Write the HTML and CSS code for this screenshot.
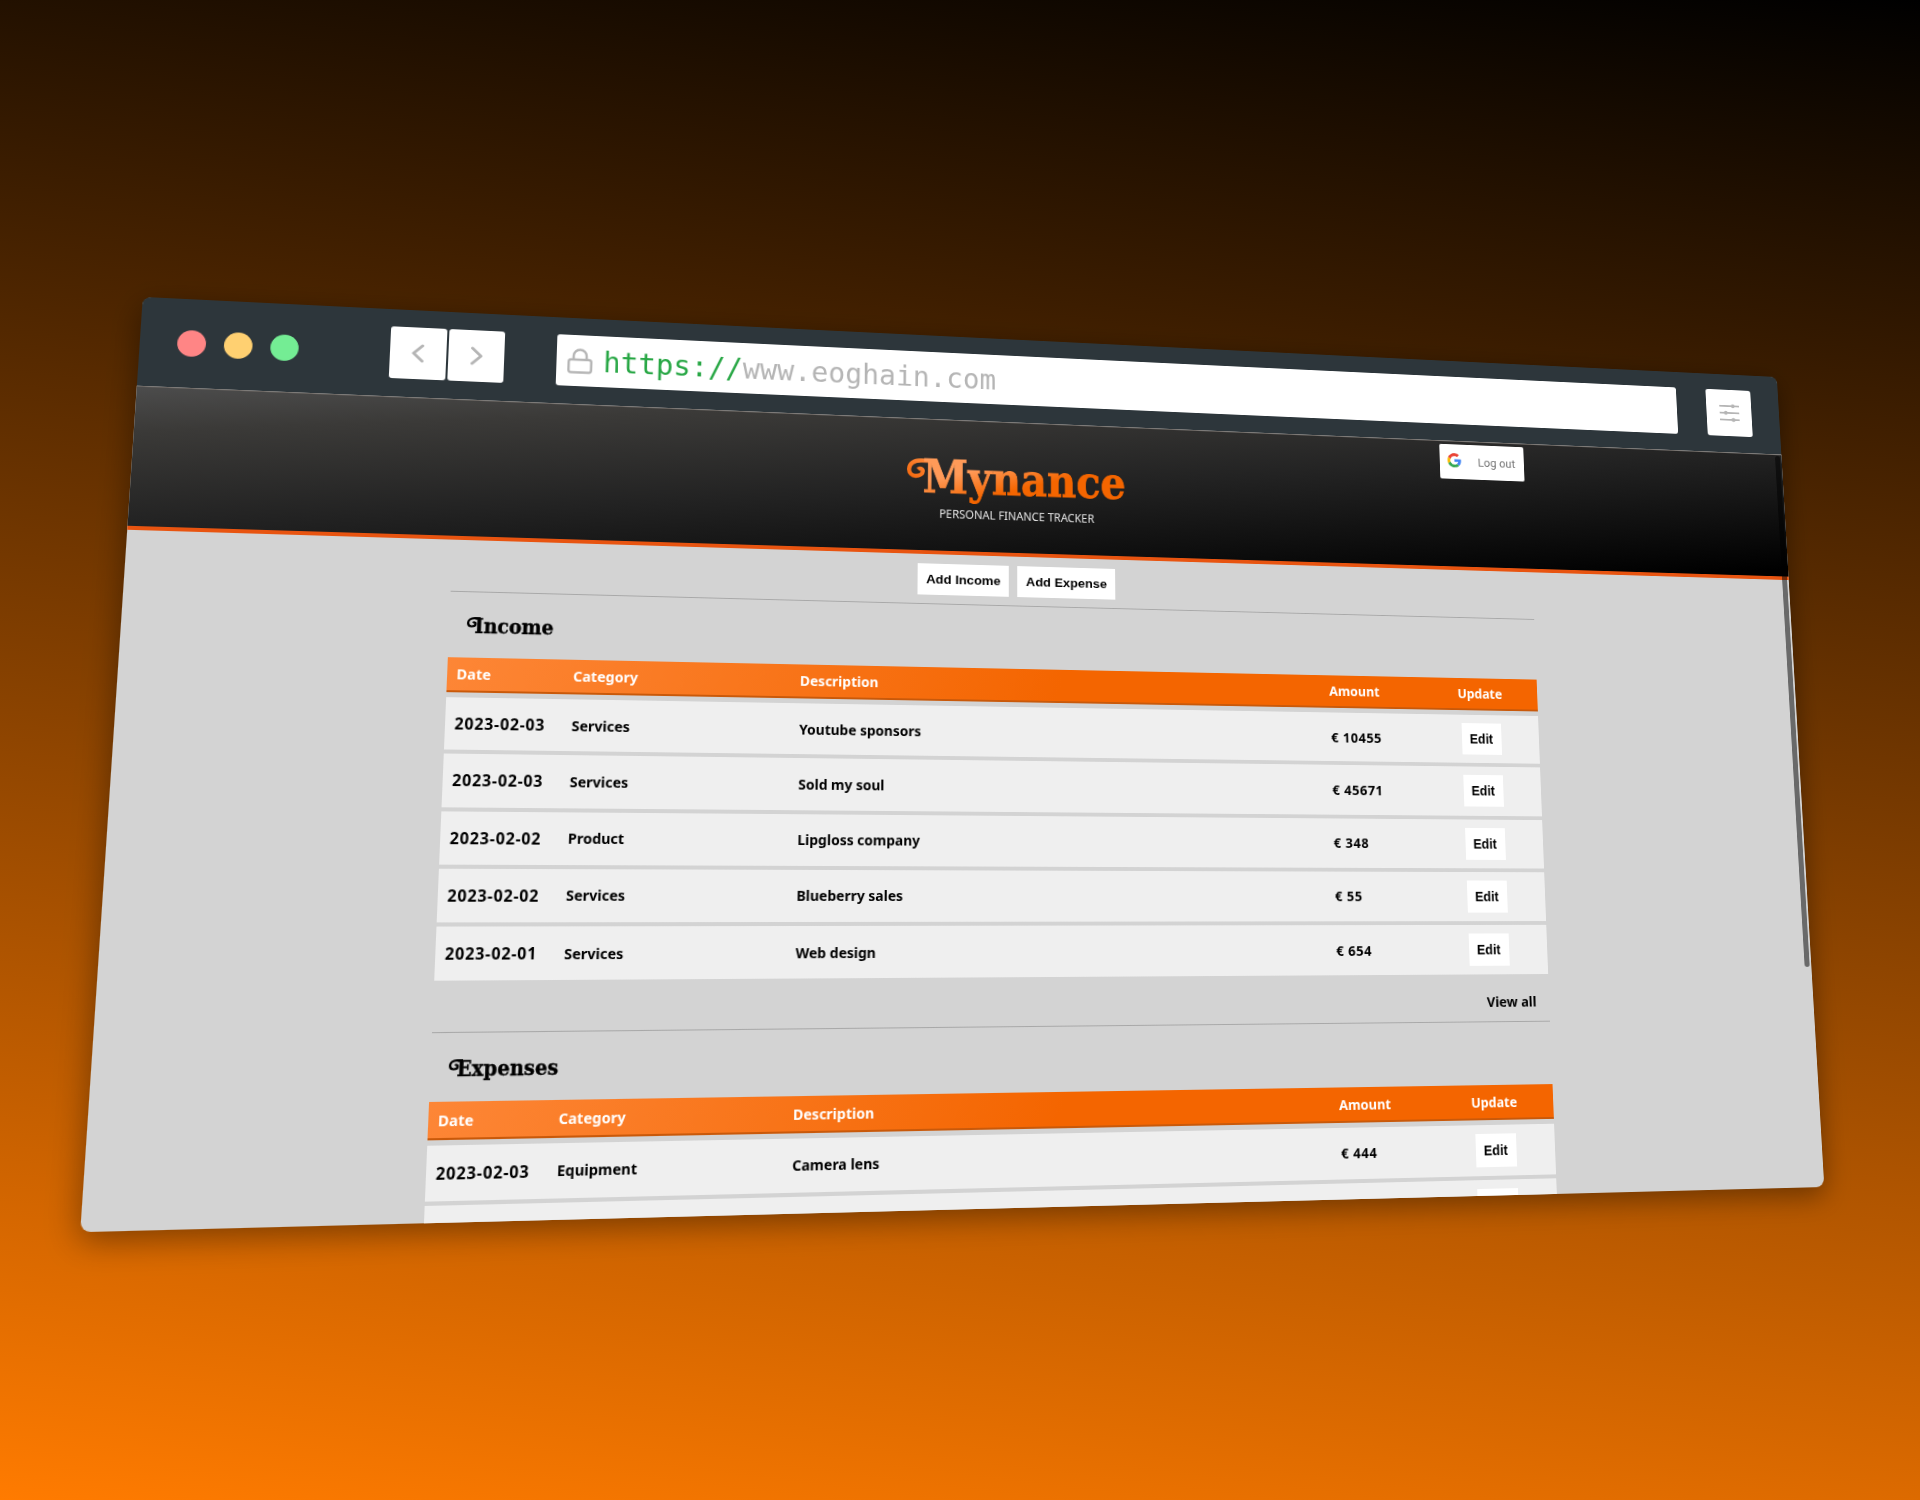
FILE: index.html
```html
<!DOCTYPE html>
<html lang="en">
<head>
<meta charset="utf-8">
<title>Mynance</title>
<link rel="stylesheet" href="styles.css">
</head>
<body>
<div class="window">
  <div class="toolbar">
    <div class="dots"><span class="dot red"></span><span class="dot yellow"></span><span class="dot green"></span></div>
    <div class="nav">
      <span class="tool"><svg width="12" height="20" viewBox="0 0 12 20"><path d="M10.5 2 2 10l8.500 8"/></svg></span>
      <span class="tool"><svg width="12" height="20" viewBox="0 0 12 20"><path d="M1.500 2 10 10l-8.500 8"/></svg></span>
    </div>
    <div class="address">
      <svg class="lock" width="25" height="27" viewBox="0 0 25 27"><rect x="1.200" y="12" width="22.600" height="13.500" rx="2.500"/><path d="M6 12V8a6.500 6.500 0 0 1 13 0v4"/></svg>
      <span class="url"><span class="scheme">https://</span>www.eoghain.com</span>
    </div>
    <span class="tool settings"><svg width="24" height="22" viewBox="0 0 24 22"><path d="M0 3h24M0 11h24M0 19h24"/><circle cx="16.500" cy="3" r="2.300"/><circle cx="7.500" cy="11" r="2.300"/><circle cx="16.500" cy="19" r="2.300"/></svg></span>
  </div>
  <div class="page">
    <header class="header">
      <div class="brand">
        <div class="logo"><svg class="swash" width="26" height="22" viewBox="0 0 26 22"><defs><linearGradient id="sw" x1="0" y1="1" x2="1" y2="0"><stop offset="0" stop-color="#f46a10"/><stop offset="1" stop-color="#ff8a3c"/></linearGradient></defs><path stroke="url(#sw)" d="M26 2.200H15C7 2.200 2.200 6.500 2.200 12c0 4 3 7 7 7 4.500 0 7.500-2.500 7.500-5.500 0-2.500-3.200-3.500-5-1.500"/></svg><span>Mynance</span></div>
        <div class="tagline">PERSONAL FINANCE TRACKER</div>
      </div>
      <div class="logout">
        <svg width="16" height="16" viewBox="0 0 48 48"><path fill="#EA4335" d="M24 9.500c3.540 0 6.710 1.220 9.210 3.600l6.850-6.850C35.900 2.380 30.470 0 24 0 14.620 0 6.510 5.380 2.560 13.220l7.980 6.190C12.430 13.720 17.740 9.500 24 9.500z"/><path fill="#4285F4" d="M46.980 24.550c0-1.570-.15-3.090-.38-4.550H24v9.020h12.940c-.58 2.960-2.260 5.480-4.780 7.180l7.730 6c4.510-4.180 7.090-10.360 7.090-17.650z"/><path fill="#FBBC05" d="M10.530 28.590c-.48-1.450-.76-2.990-.76-4.590s.27-3.140.76-4.590l-7.980-6.190C.92 16.460 0 20.120 0 24c0 3.880.92 7.540 2.560 10.780l7.970-6.190z"/><path fill="#34A853" d="M24 48c6.480 0 11.930-2.130 15.890-5.810l-7.730-6c-2.150 1.450-4.920 2.300-8.160 2.300-6.260 0-11.570-4.220-13.470-9.910l-7.980 6.190C6.510 42.620 14.620 48 24 48z"/></svg>
        <span>Log out</span>
      </div>
    </header>
    <main class="content">
      <div class="actions"><span class="btn">Add Income</span><span class="btn">Add Expense</span></div>
      <section class="section">
        <h2 class="title"><svg class="swash" width="13" height="11" viewBox="0 0 26 22"><path stroke="#000" d="M26 2.200H15C7 2.200 2.200 6.500 2.200 12c0 4 3 7 7 7 4.500 0 7.500-2.500 7.500-5.500 0-2.500-3.200-3.500-5-1.500"/></svg><span>Income</span></h2>
        <div class="row head"><span>Date</span><span>Category</span><span>Description</span><span>Amount</span><span class="upd">Update</span></div>
        <div class="row"><span class="date">2023-02-03</span><span>Services</span><span>Youtube sponsors</span><span class="amount">€ 10455</span><span class="upd"><b class="btn edit">Edit</b></span></div>
        <div class="row"><span class="date">2023-02-03</span><span>Services</span><span>Sold my soul</span><span class="amount">€ 45671</span><span class="upd"><b class="btn edit">Edit</b></span></div>
        <div class="row"><span class="date">2023-02-02</span><span>Product</span><span>Lipgloss company</span><span class="amount">€ 348</span><span class="upd"><b class="btn edit">Edit</b></span></div>
        <div class="row"><span class="date">2023-02-02</span><span>Services</span><span>Blueberry sales</span><span class="amount">€ 55</span><span class="upd"><b class="btn edit">Edit</b></span></div>
        <div class="row"><span class="date">2023-02-01</span><span>Services</span><span>Web design</span><span class="amount">€ 654</span><span class="upd"><b class="btn edit">Edit</b></span></div>
        <div class="viewall">View all</div>
      </section>
      <section class="section">
        <h2 class="title"><svg class="swash" width="13" height="11" viewBox="0 0 26 22"><path stroke="#000" d="M26 2.200H15C7 2.200 2.200 6.500 2.200 12c0 4 3 7 7 7 4.500 0 7.500-2.500 7.500-5.500 0-2.500-3.200-3.500-5-1.500"/></svg><span>Expenses</span></h2>
        <div class="row head"><span>Date</span><span>Category</span><span>Description</span><span>Amount</span><span class="upd">Update</span></div>
        <div class="row"><span class="date">2023-02-03</span><span>Equipment</span><span>Camera lens</span><span class="amount">€ 444</span><span class="upd"><b class="btn edit">Edit</b></span></div>
        <div class="row"><span></span><span></span><span></span><span></span><span class="upd"><b class="btn edit"></b></span></div>
      </section>
    </main>
    <div class="scrollbar"></div>
  </div>
</div>
</body>
</html>
```
FILE: styles.css
```css
* { box-sizing: border-box; }

body {
  margin: 0;
  width: 1920px;
  height: 1500px;
  overflow: hidden;
  background: linear-gradient(7deg, #ff7b00, #000);
  font-family: "Noto Sans", "Open Sans", sans-serif;
}

.window {
  width: 1760px;
  height: 900px;
  display: flex;
  flex-direction: column;
  border-radius: 9px;
  background: #d3d3d3;
  box-shadow: 0 8px 30px rgba(0, 0, 0, .4);
  transform-origin: 0 0;
  transform: matrix3d(1.08079, .077841, 0, .0000857608, -.075544, .947167, 0, -.0000747089, 0, 0, 1, 0, 142.8, 296.9, 0, 1);
}

.toolbar {
  flex: none;
  height: 90.600px;
  display: flex;
  align-items: center;
  padding: 0 34px 0 34.700px;
  border-radius: 8px 8px 0 0;
  background: #2d363b;
}

.dots { display: flex; gap: 16.500px; width: 203px; }
.dot { width: 27.500px; height: 27.500px; border-radius: 50%; }
.red { background: #ff8585; }
.yellow { background: #ffd071; }
.green { background: #74ed94; }

.nav { display: flex; gap: 2.500px; width: 164px; }

.tool {
  width: 55px;
  height: 54px;
  display: flex;
  align-items: center;
  justify-content: center;
  border-radius: 3px;
  background: #fff;
}
.tool svg { fill: none; stroke: #b5b5b5; stroke-width: 3; stroke-linecap: round; stroke-linejoin: round; }
.settings { margin-left: auto; }
.settings svg { stroke-width: 1.800; }
.settings circle { fill: #b5b5b5; stroke: none; }

.address {
  width: 1233px;
  height: 54px;
  display: flex;
  align-items: center;
  gap: 11px;
  padding-left: 11px;
  border-radius: 3px;
  background: #fff;
}
.lock { fill: none; stroke: #b5b5b5; stroke-width: 2.400; }
.url { padding-top: 1px; font: 29.500px/54px "DejaVu Sans Mono", monospace; color: #b5b5b5; }
.scheme { color: #28a745; }

.page { position: relative; flex: 1; min-height: 0; overflow: hidden; border-radius: 0 0 9px 9px; }

.header {
  position: relative;
  height: 145.600px;
  display: flex;
  justify-content: center;
  border-top: 1px solid #6c6763;
  border-bottom: 4px solid #e85410;
  background: linear-gradient(to bottom right, #4c4c4c, #3b3a38 16%, #222 50%, #000 97%);
}

.brand { display: flex; flex-direction: column; align-items: center; padding-top: 33px; }
.logo { display: flex; font: bold 48px/56px "DejaVu Serif Condensed", "DejaVu Serif", serif; }
.logo span {
  color: transparent;
  background: linear-gradient(165deg, #ff9a58 30%, #f46500 58%);
  background-clip: text;
  -webkit-background-clip: text;
  -webkit-text-stroke: .8px transparent;
}
.swash { fill: none; stroke-width: 4.400; margin-right: -9px; }
.logo .swash { margin-top: 9px; }
.tagline { margin-top: 2.500px; font-size: 11.850px; line-height: 18px; color: #e4e4e4; }

.logout {
  position: absolute;
  left: 1351px;
  top: 3px;
  width: 98px;
  height: 39px;
  display: flex;
  align-items: center;
  padding: 0 9px 3px;
  gap: 19px;
  border-radius: 2px;
  background: #fff;
  font: 13px Roboto, sans-serif;
  color: #757575;
}
.logout span { padding-top: 4px; white-space: nowrap; }
.logout svg { flex: none; }

.content { width: 1147px; margin: 0 auto; }
.actions { display: flex; justify-content: center; gap: 9px; padding-top: 9.500px; height: 52.200px; }
.btn {
  height: 33.500px;
  padding: 0 9px;
  background: #fff;
  color: #000;
  font: bold 13.700px/34px "Liberation Sans", sans-serif;
}

.section { border-top: 1px solid #a8a8a8; height: 432.800px; }
.title {
  display: flex;
  height: 65.300px;
  margin: 0;
  padding: 20px 0 0 17px;
  font: bold 20.500px/28px "DejaVu Serif Condensed", "DejaVu Serif", serif;
  -webkit-text-stroke: .35px #000;
}
.title .swash { margin: 5px -5px 0 0; }

.row {
  display: grid;
  grid-template-columns: 113px 226px 563px 114px 131px;
  align-items: center;
  height: 52.300px;
  margin-bottom: 4px;
  background: #efefef;
  font-size: 14px;
  font-weight: 700;
  color: #000;
}
.row > span { padding-left: 9.500px; white-space: nowrap; }
.row > .upd { display: flex; justify-content: center; padding: 0; }
.row .date { font-size: 15.300px; letter-spacing: .75px; }
.row .amount { padding-left: 10.500px; font-size: 14.200px; letter-spacing: .6px; }
.edit { width: 45px; height: 34px; padding: 0; text-align: center; font-size: 14px; line-height: 35px; }
.head {
  height: 35.700px;
  margin-bottom: 4.600px;
  border-bottom: 2px solid #c9590a;
  background: linear-gradient(110deg, #fd8636, #f46500 54%);
  color: #fff;
}

.viewall { padding: 12px 14px 0 0; text-align: right; font-size: 14.500px; font-weight: 700; line-height: 24px; }

.scrollbar {
  position: absolute;
  top: 2px;
  right: 2.500px;
  width: 6px;
  height: 573px;
  border-radius: 3px;
  background: rgba(0, 0, 0, .5);
}
```
